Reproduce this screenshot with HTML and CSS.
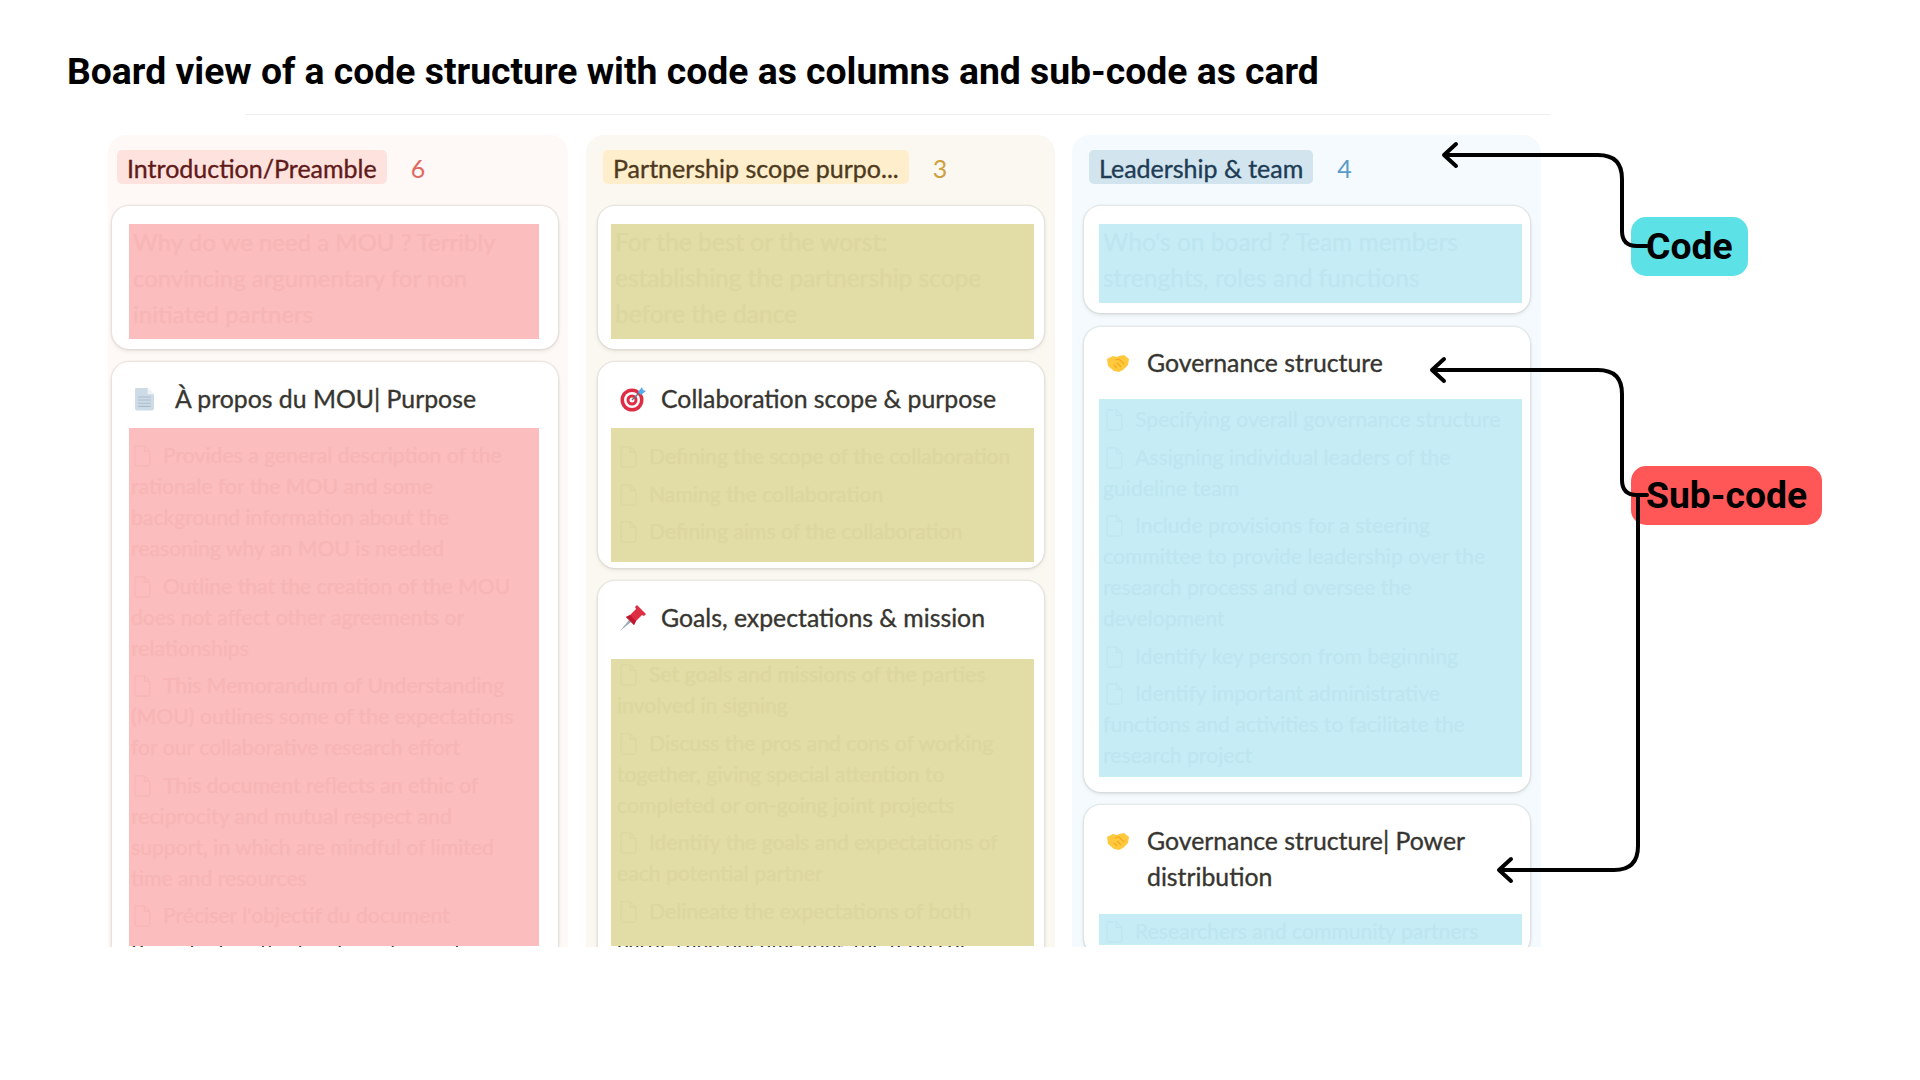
FILE: index.html
```html
<!DOCTYPE html>
<html lang="en">
<head>
  <meta charset="UTF-8">
  <meta name="viewport" content="width=device-width, initial-scale=1.0">
  <title>Board view of a code structure</title>
  <link rel="stylesheet" href="styles.css">
</head>
<body>
  <svg class="icon-defs" width="0" height="0">
    <symbol id="doc-outline" viewBox="0 0 20 24">
      <path d="M2 1h10l6 6v14a2 2 0 0 1-2 2H4a2 2 0 0 1-2-2z M12 1v6h6" fill="none" stroke="currentColor" stroke-width="1.2"/>
    </symbol>
  </svg>

  <div class="stage">
    <h1 class="page-title">Board view of a code structure with code as columns and sub-code as card</h1>
    <hr class="divider">

    <div class="board">

      <!-- Introduction -->
      <section class="column column-red">
        <div class="column-head">
          <span class="tag">Introduction/Preamble</span>
          <span class="count">6</span>
        </div>
        <div class="card card-plain">
          <div class="fill fill-first">
            <p class="card-lead">Why do we need a MOU ? Terribly<br>convincing argumentary for non<br>initiated partners</p>
          </div>
        </div>
        <div class="card">
          <div class="card-head">
            <span class="emoji">
              <svg width="21" height="26" viewBox="0 0 20 24">
                <path d="M2 1.500h11l6 6V21a2 2 0 0 1-2 2H3a2 2 0 0 1-2-2V2.500a1 1 0 0 1 1-1z" fill="#cddbe6"/>
                <path d="M13 1.500l6 6h-6z" fill="#eef3f7"/>
                <path d="M4 10h12M4 13h12M4 16h12M4 19h12" stroke="#a9bccb" stroke-width="1"/>
              </svg>
            </span>
            <span class="card-title">À propos du MOU| Purpose</span>
          </div>
          <div class="fill fill-purpose">
            <p><svg class="doc"><use href="#doc-outline"/></svg>Provides a general description of the<br>rationale for the MOU and some<br>background information about the<br>reasoning why an MOU is needed</p>
            <p><svg class="doc"><use href="#doc-outline"/></svg>Outline that the creation of the MOU<br>does not affect other agreements or<br>relationships</p>
            <p><svg class="doc"><use href="#doc-outline"/></svg>This Memorandum of Understanding<br>(MOU) outlines some of the expectations<br>for our collaborative research effort</p>
            <p><svg class="doc"><use href="#doc-outline"/></svg>This document reflects an ethic of<br>reciprocity and mutual respect and<br>support, in which are mindful of limited<br>time and resources</p>
            <p><svg class="doc"><use href="#doc-outline"/></svg>Préciser l'objectif du document</p>
          </div>
          <p class="peek peek-low">Rappeler les attentes du partenariat</p>
        </div>
      </section>

      <!-- Partnership -->
      <section class="column column-yellow">
        <div class="column-head">
          <span class="tag">Partnership scope purpo...</span>
          <span class="count">3</span>
        </div>
        <div class="card card-plain">
          <div class="fill fill-first">
            <p class="card-lead">For the best or the worst:<br>establishing the partnership scope<br>before the dance</p>
          </div>
        </div>
        <div class="card">
          <div class="card-head">
            <span class="emoji">
              <svg width="26" height="26" viewBox="0 0 26 26">
                <circle cx="12" cy="14" r="11.500" fill="#dd2e44"/>
                <circle cx="12" cy="14" r="8" fill="#fff"/>
                <circle cx="12" cy="14" r="5.500" fill="#dd2e44"/>
                <circle cx="12" cy="14" r="2.500" fill="#fff"/>
                <path d="M12 14L21 5" stroke="#66757f" stroke-width="1.500"/>
                <path d="M18 6l4-5 1 3 3 1-5 4z" fill="#55acee"/>
              </svg>
            </span>
            <span class="card-title">Collaboration scope &amp; purpose</span>
          </div>
          <div class="fill fill-scope">
            <p><svg class="doc"><use href="#doc-outline"/></svg>Defining the scope of the collaboration</p>
            <p><svg class="doc"><use href="#doc-outline"/></svg>Naming the collaboration</p>
            <p><svg class="doc"><use href="#doc-outline"/></svg>Defining aims of the collaboration</p>
          </div>
        </div>
        <div class="card">
          <div class="card-head">
            <span class="emoji">
              <svg width="26" height="26" viewBox="0 0 26 26">
                <path d="M0 26l9-11 2 2z" fill="#99aab5"/>
                <path d="M6 12l4-2 6-6-1-2 2-2 9 9-2 2-2-1-6 6-2 4z" fill="#dd2e44"/>
                <path d="M6 12l8 8 2-4-6-6z" fill="#be1931"/>
              </svg>
            </span>
            <span class="card-title">Goals, expectations &amp; mission</span>
          </div>
          <div class="fill fill-goals">
            <p><svg class="doc"><use href="#doc-outline"/></svg>Set goals and missions of the parties<br>involved in signing</p>
            <p><svg class="doc"><use href="#doc-outline"/></svg>Discuss the pros and cons of working<br>together, giving special attention to<br>completed or on-going joint projects</p>
            <p><svg class="doc"><use href="#doc-outline"/></svg>Identify the goals and expectations of<br>each potential partner</p>
            <p><svg class="doc"><use href="#doc-outline"/></svg>Delineate the expectations of both</p>
          </div>
          <p class="peek">parties and documenting the terms of</p>
        </div>
      </section>

      <!-- Leadership -->
      <section class="column column-blue">
        <div class="column-head">
          <span class="tag">Leadership &amp; team</span>
          <span class="count">4</span>
        </div>
        <div class="card card-plain card-spaced">
          <div class="fill fill-first fill-short">
            <p class="card-lead">Who's on board ? Team members<br>strenghts, roles and functions</p>
          </div>
        </div>
        <div class="card">
          <div class="card-head head-tight">
            <span class="emoji">
              <svg width="24" height="18" viewBox="0 0 24 18">
                <path d="M1 5l6-3 4 1 2-1 5-1 5 4-1 6-5 5-4 2-5-1-6-5z" fill="#ffc83d"/>
                <path d="M9 6l4-1 5 5M8 11l3 3M11 9l4 4" fill="none" stroke="#f4a91f" stroke-width="1.200"/>
              </svg>
            </span>
            <span class="card-title">Governance structure</span>
          </div>
          <div class="fill fill-governance">
            <p><svg class="doc"><use href="#doc-outline"/></svg>Specifying overall governance structure</p>
            <p><svg class="doc"><use href="#doc-outline"/></svg>Assigning individual leaders of the<br>guideline team</p>
            <p><svg class="doc"><use href="#doc-outline"/></svg>Include provisions for a steering<br>committee to provide leadership over the<br>research process and oversee the<br>development</p>
            <p><svg class="doc"><use href="#doc-outline"/></svg>Identify key person from beginning</p>
            <p><svg class="doc"><use href="#doc-outline"/></svg>Identify important administrative<br>functions and activities to facilitate the<br>research project</p>
          </div>
        </div>
        <div class="card">
          <div class="card-head head-tight head-last">
            <span class="emoji">
              <svg width="24" height="18" viewBox="0 0 24 18">
                <path d="M1 5l6-3 4 1 2-1 5-1 5 4-1 6-5 5-4 2-5-1-6-5z" fill="#ffc83d"/>
                <path d="M9 6l4-1 5 5M8 11l3 3M11 9l4 4" fill="none" stroke="#f4a91f" stroke-width="1.200"/>
              </svg>
            </span>
            <span class="card-title">Governance structure| Power<br>distribution</span>
          </div>
          <div class="fill fill-power">
            <p><svg class="doc"><use href="#doc-outline"/></svg>Researchers and community partners</p>
          </div>
        </div>
      </section>
    </div>

    <!-- annotation callouts -->
    <div class="callout callout-code">Code</div>
    <div class="callout callout-sub">Sub-code</div>
    <svg class="arrows" width="1920" height="1080" viewBox="0 0 1920 1080">
      <path d="M1647 246H1637Q1622 246 1622 231V179Q1622 155 1598 155H1445"/>
      <path d="M1456 144L1444 155L1456 166"/>
      <path d="M1647 495H1637Q1622 495 1622 480V394Q1622 370 1598 370H1433"/>
      <path d="M1444 359L1432 370L1444 381"/>
      <path d="M1638 495V846Q1638 870 1614 870H1500"/>
      <path d="M1511 859L1499 870L1511 881"/>
    </svg>
  </div>
</body>
</html>
```

FILE: styles.css
```css
* {
  box-sizing: border-box;
}
body {
  margin: 0;
  background: #fff;
  font-family: Lato, "Noto Sans", sans-serif;
}
p {
  margin: 0;
}
.icon-defs {
  position: absolute;
}
.stage {
  position: relative;
  width: 1920px;
  height: 1080px;
  overflow: hidden;
}
.page-title {
  margin: 0;
  padding: 50px 0 0 67px;
  height: 92px;
  font-family: Roboto, sans-serif;
  font-size: 37.300px;
  line-height: 42px;
  font-weight: 700;
  color: #000;
  white-space: nowrap;
}
.divider {
  margin: 22px 0 0 245px;
  width: 1305px;
  height: 1px;
  border: none;
  background: #eeeeee;
}

/* board */
.board {
  display: flex;
  margin: 20px 0 0 108px;
  height: 812px;
  overflow: hidden;
}
.column {
  flex: none;
  width: 469px;
  height: 812px;
  padding: 15px 11px 0 12px;
  border-radius: 18px 18px 0 0;
  overflow: hidden;
  margin-right: 17px;
  --lead: 24.500px;
}
.column-red {
  width: 460px;
  padding-left: 4px;
  padding-right: 10px;
  margin-right: 18px;
  background: #fef8f6;
  --fill: #fbbdbd;
  --ghost: #f8b5b5;
  --fill-l: 17px;
  --fill-r: 19px;
  --inset: 2px;
  --lead: 24px;
  --tag-bg: #fee2de;
  --tag-fg: #5f1a1a;
  --count: #e0695f;
}
.column-yellow {
  background: #fbf8f1;
  --fill: #e2dca6;
  --ghost: #dcd69f;
  --fill-l: 13px;
  --fill-r: 10px;
  --inset: 6px;
  --tag-bg: #feeecb;
  --tag-fg: #4d3a20;
  --count: #d0a040;
}
.column-blue {
  background: #f4fafd;
  margin-right: 0;
  --fill: #c6edf6;
  --ghost: #bde6f0;
  --fill-l: 15px;
  --fill-r: 8px;
  --inset: 4px;
  --tag-bg: #d2e4ee;
  --tag-fg: #1e3c55;
  --count: #5a9ac8;
}
.column-head {
  display: flex;
  align-items: center;
  gap: 24px;
  margin: 0 0 22px 5px;
  height: 34px;
}
.tag {
  padding: 1px 10px 0;
  height: 34px;
  line-height: 34px;
  border-radius: 5px;
  font-size: 25px;
  background: var(--tag-bg);
  color: var(--tag-fg);
  white-space: nowrap;
  -webkit-text-stroke: 0.35px var(--tag-fg);
}
.count {
  padding-top: 2px;
  font-size: 25px;
  color: var(--count);
}

/* cards */
.card {
  margin-bottom: 13px;
  background: #fff;
  border-radius: 17px;
  box-shadow: 0 0 0 1.500px rgba(60, 50, 40, 0.07), 0 2px 4px rgba(60, 50, 40, 0.1);
  padding-bottom: 10px;
}
.card-plain {
  padding-top: 18px;
}
.card-spaced {
  margin-bottom: 14px;
}
.card-head {
  display: flex;
  align-items: flex-start;
  padding: 19px 22px 11px;
  font-size: 24.800px;
  line-height: 36px;
  color: #37352f;
}
.head-tight {
  padding-top: 18px;
  padding-bottom: 18px;
}
.head-last {
  padding-bottom: 19px;
}
.emoji {
  flex: none;
  display: flex;
  align-items: center;
  width: 41px;
  height: 36px;
}
.card-title {
  -webkit-text-stroke: 0.35px #37352f;
}
.fill {
  position: relative;
  z-index: 1;
  margin: 0 var(--fill-r) 0 var(--fill-l);
  background: var(--fill);
  color: var(--ghost);
  font-size: 21.200px;
  line-height: 31px;
  white-space: nowrap;
  overflow: hidden;
  -webkit-text-stroke: 0.25px var(--ghost);
}
.fill p {
  padding-left: var(--inset);
}
.fill p + p {
  margin-top: 6.500px;
}
.doc {
  width: 19px;
  height: 22px;
  margin: 0 11px 0 2px;
  vertical-align: -4px;
}
.fill .card-lead {
  padding-left: 4px;
  font-size: var(--lead);
  line-height: 36px;
}

/* one block per hand-drawn fill */
.fill-first {
  height: 115px;
}
.fill-short {
  height: 79px;
}
.fill-purpose {
  height: 518px;
  padding-top: 12px;
}
.fill-scope {
  margin-bottom: -4px;
  padding: 13px 0 15px;
}
.fill-goals {
  height: 287px;
  margin-top: 12px;
}
.fill-governance {
  height: 378px;
  margin-bottom: 5px;
  padding-top: 5px;
}
.fill-power {
  height: 31px;
  padding-top: 2px;
}
.peek {
  margin: -19px 0 0 var(--fill-l);
  padding-left: var(--inset);
  font-size: 21.200px;
  line-height: 31px;
  color: #37352f;
  white-space: nowrap;
}
.peek-low {
  margin-top: -11px;
}

/* callouts */
.callout {
  position: absolute;
  left: 1631px;
  padding: 0 15px;
  height: 59px;
  border-radius: 15px;
  font-family: Roboto, sans-serif;
  font-size: 37.300px;
  font-weight: 700;
  line-height: 58px;
  color: #000;
}
.callout-code {
  top: 217px;
  background: #5ce1e6;
}
.callout-sub {
  top: 466px;
  background: #ff5757;
}
.arrows {
  position: absolute;
  top: 0;
  left: 0;
}
.arrows path {
  fill: none;
  stroke: #000;
  stroke-width: 4;
  stroke-linecap: round;
  stroke-linejoin: round;
}
```
